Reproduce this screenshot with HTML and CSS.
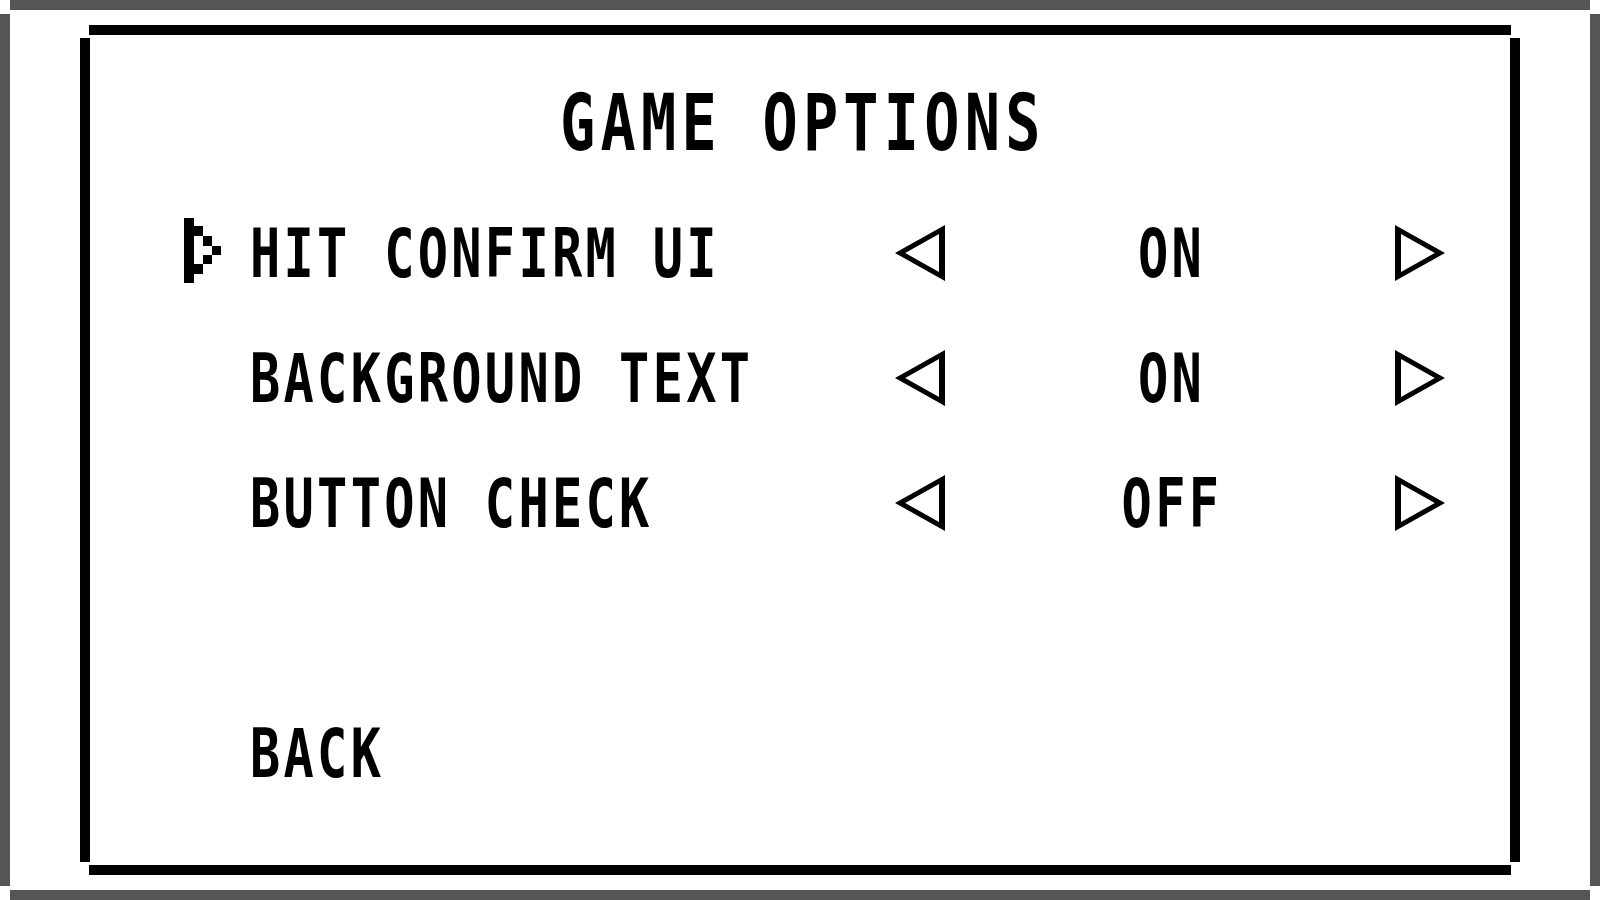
FILE: index.html
```html
<!DOCTYPE html>
<html lang="en">
<head>
    <meta charset="UTF-8">
    <meta name="viewport" content="width=device-width, initial-scale=1.0">
    <title>Game Options</title>
    <link rel="stylesheet" href="styles.css">
</head>
<body>
<div class="screen">
    <div class="screen-inner">
        <div class="panel">
            <div class="panel-body">
                <h1 class="title"><span>GAME OPTIONS</span></h1>

                <div class="menu">
                    <div class="row">
                        <div class="cursor">
                            <svg width="37" height="65" viewBox="0 0 37 65" shape-rendering="crispEdges">
                                <rect x="0" y="0" width="10" height="65"/>
                                <rect x="10" y="8" width="9" height="10"/>
                                <rect x="19" y="18" width="9" height="10"/>
                                <rect x="28" y="28" width="9" height="9"/>
                                <rect x="19" y="37" width="9" height="9"/>
                                <rect x="10" y="46" width="9" height="10"/>
                            </svg>
                        </div>
                        <div class="label"><span>HIT CONFIRM UI</span></div>
                        <div class="arrow">
                            <svg width="50" height="56" viewBox="0 0 50 56"><path fill-rule="evenodd" d="M0 28 L50 0 L50 56 Z M10.2 28 L44 46.9 L44 9.1 Z"/></svg>
                        </div>
                        <div class="value"><span>ON</span></div>
                        <div class="arrow">
                            <svg width="50" height="56" viewBox="0 0 50 56"><path fill-rule="evenodd" d="M50 28 L0 0 L0 56 Z M39.8 28 L6 46.9 L6 9.1 Z"/></svg>
                        </div>
                    </div>

                    <div class="row">
                        <div class="cursor"></div>
                        <div class="label"><span>BACKGROUND TEXT</span></div>
                        <div class="arrow">
                            <svg width="50" height="56" viewBox="0 0 50 56"><path fill-rule="evenodd" d="M0 28 L50 0 L50 56 Z M10.2 28 L44 46.9 L44 9.1 Z"/></svg>
                        </div>
                        <div class="value"><span>ON</span></div>
                        <div class="arrow">
                            <svg width="50" height="56" viewBox="0 0 50 56"><path fill-rule="evenodd" d="M50 28 L0 0 L0 56 Z M39.8 28 L6 46.9 L6 9.1 Z"/></svg>
                        </div>
                    </div>

                    <div class="row">
                        <div class="cursor"></div>
                        <div class="label"><span>BUTTON CHECK</span></div>
                        <div class="arrow">
                            <svg width="50" height="56" viewBox="0 0 50 56"><path fill-rule="evenodd" d="M0 28 L50 0 L50 56 Z M10.2 28 L44 46.9 L44 9.1 Z"/></svg>
                        </div>
                        <div class="value"><span>OFF</span></div>
                        <div class="arrow">
                            <svg width="50" height="56" viewBox="0 0 50 56"><path fill-rule="evenodd" d="M50 28 L0 0 L0 56 Z M39.8 28 L6 46.9 L6 9.1 Z"/></svg>
                        </div>
                    </div>

                    <div class="row"></div>

                    <div class="row">
                        <div class="cursor"></div>
                        <div class="label"><span>BACK</span></div>
                    </div>
                </div>
            </div>
        </div>
    </div>
</div>
</body>
</html>
```

FILE: styles.css
```css
*{
    margin: 0;
    padding: 0;
    box-sizing: border-box;
}
body{
    background: #fff;
    color: #000;
    font-family: "DejaVu Sans Mono", "Liberation Mono", monospace;
    font-weight: bold;
}

/* grey outer frame, corners left open */
.screen{
    display: flex;
    flex-direction: column;
    width: 1600px;
    height: 900px;
}
.screen::before,
.screen::after{
    content: "";
    height: 10px;
    margin: 0 10px;
    background: #555;
}
.screen-inner{
    flex: 1;
    display: flex;
    margin: 4px 0;
    padding: 11px 70px;
    border-left: 10px solid #555;
    border-right: 10px solid #555;
}

/* black pixel box */
.panel{
    flex: 1;
    display: flex;
    flex-direction: column;
}
.panel::before,
.panel::after{
    content: "";
    height: 10px;
    margin: 0 9px;
    background: #000;
}
.panel-body{
    flex: 1;
    margin: 3px 0;
    border-left: 10px solid #000;
    border-right: 10px solid #000;
}

.title{
    padding-top: 17px;
    font-size: 78px;
    line-height: 137px;
    font-weight: bold;
    text-align: center;
}
.title span{
    display: inline-block;
    letter-spacing: 7px;
    padding-left: 7px;
    transform: scaleX(0.75);
}

.row{
    display: grid;
    grid-template-columns: 66px 645px 50px 450px 50px;
    align-items: center;
    height: 125px;
    padding-left: 94px;
    font-size: 67px;
    line-height: 67px;
}
.cursor svg{
    display: block;
    margin-bottom: 8px;
}
.label{
    white-space: nowrap;
}
.label span,
.value span{
    display: inline-block;
    letter-spacing: 4.4px;
    transform: scaleX(0.75);
}
.label span{
    transform-origin: left center;
}
.value{
    text-align: center;
}
.value span{
    padding-left: 4.4px;
}
.arrow svg{
    display: block;
    margin-bottom: 3px;
}
```
